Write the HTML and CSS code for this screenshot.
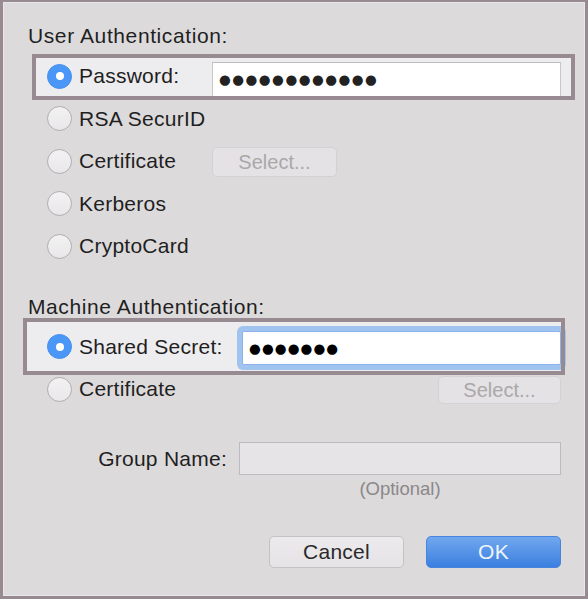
FILE: index.html
```html
<!DOCTYPE html>
<html>
<head>
<meta charset="utf-8">
<link rel="stylesheet" href="styles.css">
</head>
<body>
<div class="window">
  <div class="header">User Authentication:</div>
  <div class="group group-user">
    <div class="row hl hl-user">
      <span class="radio on"></span>
      <span class="lbl lbl-wide">Password:</span>
      <div class="field field-pw"><span class="dots">●●●●●●●●●●●●</span></div>
    </div>
    <div class="row">
      <span class="radio"></span>
      <span class="lbl">RSA SecurID</span>
    </div>
    <div class="row">
      <span class="radio"></span>
      <span class="lbl lbl-wide">Certificate</span>
      <span class="btn-disabled">Select...</span>
    </div>
    <div class="row">
      <span class="radio"></span>
      <span class="lbl">Kerberos</span>
    </div>
    <div class="row">
      <span class="radio"></span>
      <span class="lbl">CryptoCard</span>
    </div>
  </div>
  <div class="header header-machine">Machine Authentication:</div>
  <div class="group group-machine">
    <div class="row hl hl-machine">
      <span class="radio on"></span>
      <span class="lbl lbl-secret">Shared Secret:</span>
      <div class="field field-focus"><span class="dots dots-dark">●●●●●●●</span></div>
    </div>
    <div class="row">
      <span class="radio"></span>
      <span class="lbl">Certificate</span>
      <span class="btn-disabled btn-right">Select...</span>
    </div>
  </div>
  <div class="group-row">
    <span class="group-lbl">Group Name:</span>
    <div class="field-group"></div>
  </div>
  <div class="optional-row">
    <span class="optional">(Optional)</span>
  </div>
  <div class="buttons">
    <span class="btn btn-cancel">Cancel</span>
    <span class="btn btn-ok">OK</span>
  </div>
</div>
</body>
</html>
```
FILE: styles.css
```css
html, body {
  margin: 0;
  padding: 0;
  background: #dddadc;
}

.window {
  width: 588px;
  height: 599px;
  box-sizing: border-box;
  border: 3px solid #978a91;
  border-top-width: 2px;
  background: #dddadc;
  box-shadow: inset 0 0 0 1px #e8e6e8;
  padding: 22px 24px 0 25px;
  font-family: "Liberation Sans", Arial, sans-serif;
  font-size: 21px;
  letter-spacing: 0.25px;
  color: #1f1f1f;
  display: flex;
  flex-direction: column;
}

.header {
  height: 24px;
  line-height: 24px;
  letter-spacing: 0.6px;
  white-space: nowrap;
}

.header-machine {
  margin-top: 27.5px;
}

.group-user {
  margin-top: 7px;
}

.group-machine {
  margin-top: 6.5px;
}

.row {
  height: 42.5px;
  display: flex;
  align-items: center;
  position: relative;
  z-index: 0;
}

.radio {
  flex: none;
  width: 25px;
  height: 25px;
  box-sizing: border-box;
  border-radius: 50%;
  border: 1px solid #b0aeb0;
  background: linear-gradient(#f3f2f3, #e9e7e9);
  margin-left: 19px;
  margin-right: 7px;
  display: flex;
  align-items: center;
  justify-content: center;
}

.radio.on {
  background: #4a97f7;
  border-color: #4690ef;
}

.radio.on::after {
  content: "";
  width: 8px;
  height: 8px;
  border-radius: 50%;
  background: #fff;
}

.lbl {
  white-space: nowrap;
}

.lbl-wide {
  width: 133px;
  flex: none;
}

.lbl-secret {
  width: 163px;
  flex: none;
}

.field {
  flex: 1;
  box-sizing: border-box;
  background: #fff;
  display: flex;
  align-items: center;
}

.field-pw {
  height: 35px;
  margin-top: 7px;
  border: 1px solid #c7c7c7;
  border-top-color: #bdbdbd;
  padding-left: 6px;
}

.field-focus {
  height: 34px;
  margin-top: 3px;
  border: 1px solid #8db4e9;
  border-radius: 2px;
  box-shadow: 0 0 0 5px #a0c3f0;
  padding-left: 6px;
}

.dots {
  font-family: "DejaVu Sans", sans-serif;
  font-size: 13.5px;
  letter-spacing: 1.5px;
  color: #222;
  line-height: 1;
}

.dots-dark {
  color: #000;
  letter-spacing: 1.1px;
}

.hl::before,
.hl::after {
  content: "";
  position: absolute;
  box-sizing: border-box;
}

.hl::before {
  background: #edecee;
  z-index: -1;
}

.hl::after {
  border: 4px solid #978a91;
  pointer-events: none;
}

.hl-user::before,
.hl-user::after {
  left: 4px;
  top: -1px;
  width: 543px;
  height: 46px;
}

.hl-machine::before,
.hl-machine::after {
  left: -5px;
  top: -7.5px;
  width: 542px;
  height: 57px;
}

.btn-disabled {
  flex: none;
  width: 125px;
  height: 30px;
  box-sizing: border-box;
  border: 1px solid #d3d1d3;
  border-radius: 5px;
  background: #e4e2e4;
  color: #aaa8aa;
  font-size: 20px;
  letter-spacing: 0;
  display: flex;
  align-items: center;
  justify-content: center;
  margin-top: 2px;
}

.btn-right {
  margin-left: auto;
  width: 123px;
  height: 28px;
}

.group-row {
  margin-top: 31.5px;
  height: 33px;
  display: flex;
  align-items: center;
  justify-content: flex-end;
}

.group-lbl {
  margin-right: 12px;
  white-space: nowrap;
}

.field-group {
  width: 322px;
  height: 33px;
  box-sizing: border-box;
  background: #e6e4e6;
  border: 1px solid #bdbbbd;
}

.optional-row {
  margin-top: 4px;
  height: 20px;
  display: flex;
  justify-content: flex-end;
}

.optional {
  width: 322px;
  text-align: center;
  font-size: 18.5px;
  letter-spacing: 0;
  line-height: 20px;
  color: #8a888a;
}

.buttons {
  margin-top: 37px;
  height: 32px;
  display: flex;
  justify-content: flex-end;
  gap: 22px;
}

.btn {
  width: 135px;
  height: 32px;
  box-sizing: border-box;
  border-radius: 5px;
  display: flex;
  align-items: center;
  justify-content: center;
}

.btn-cancel {
  border: 1px solid #c4c2c4;
  background: linear-gradient(#eceaec, #e5e3e5);
  color: #2a2a2a;
}

.btn-ok {
  border: 1px solid #4784dc;
  background: linear-gradient(#71a8ee, #3b7fe0);
  color: #eef4fd;
}
```
